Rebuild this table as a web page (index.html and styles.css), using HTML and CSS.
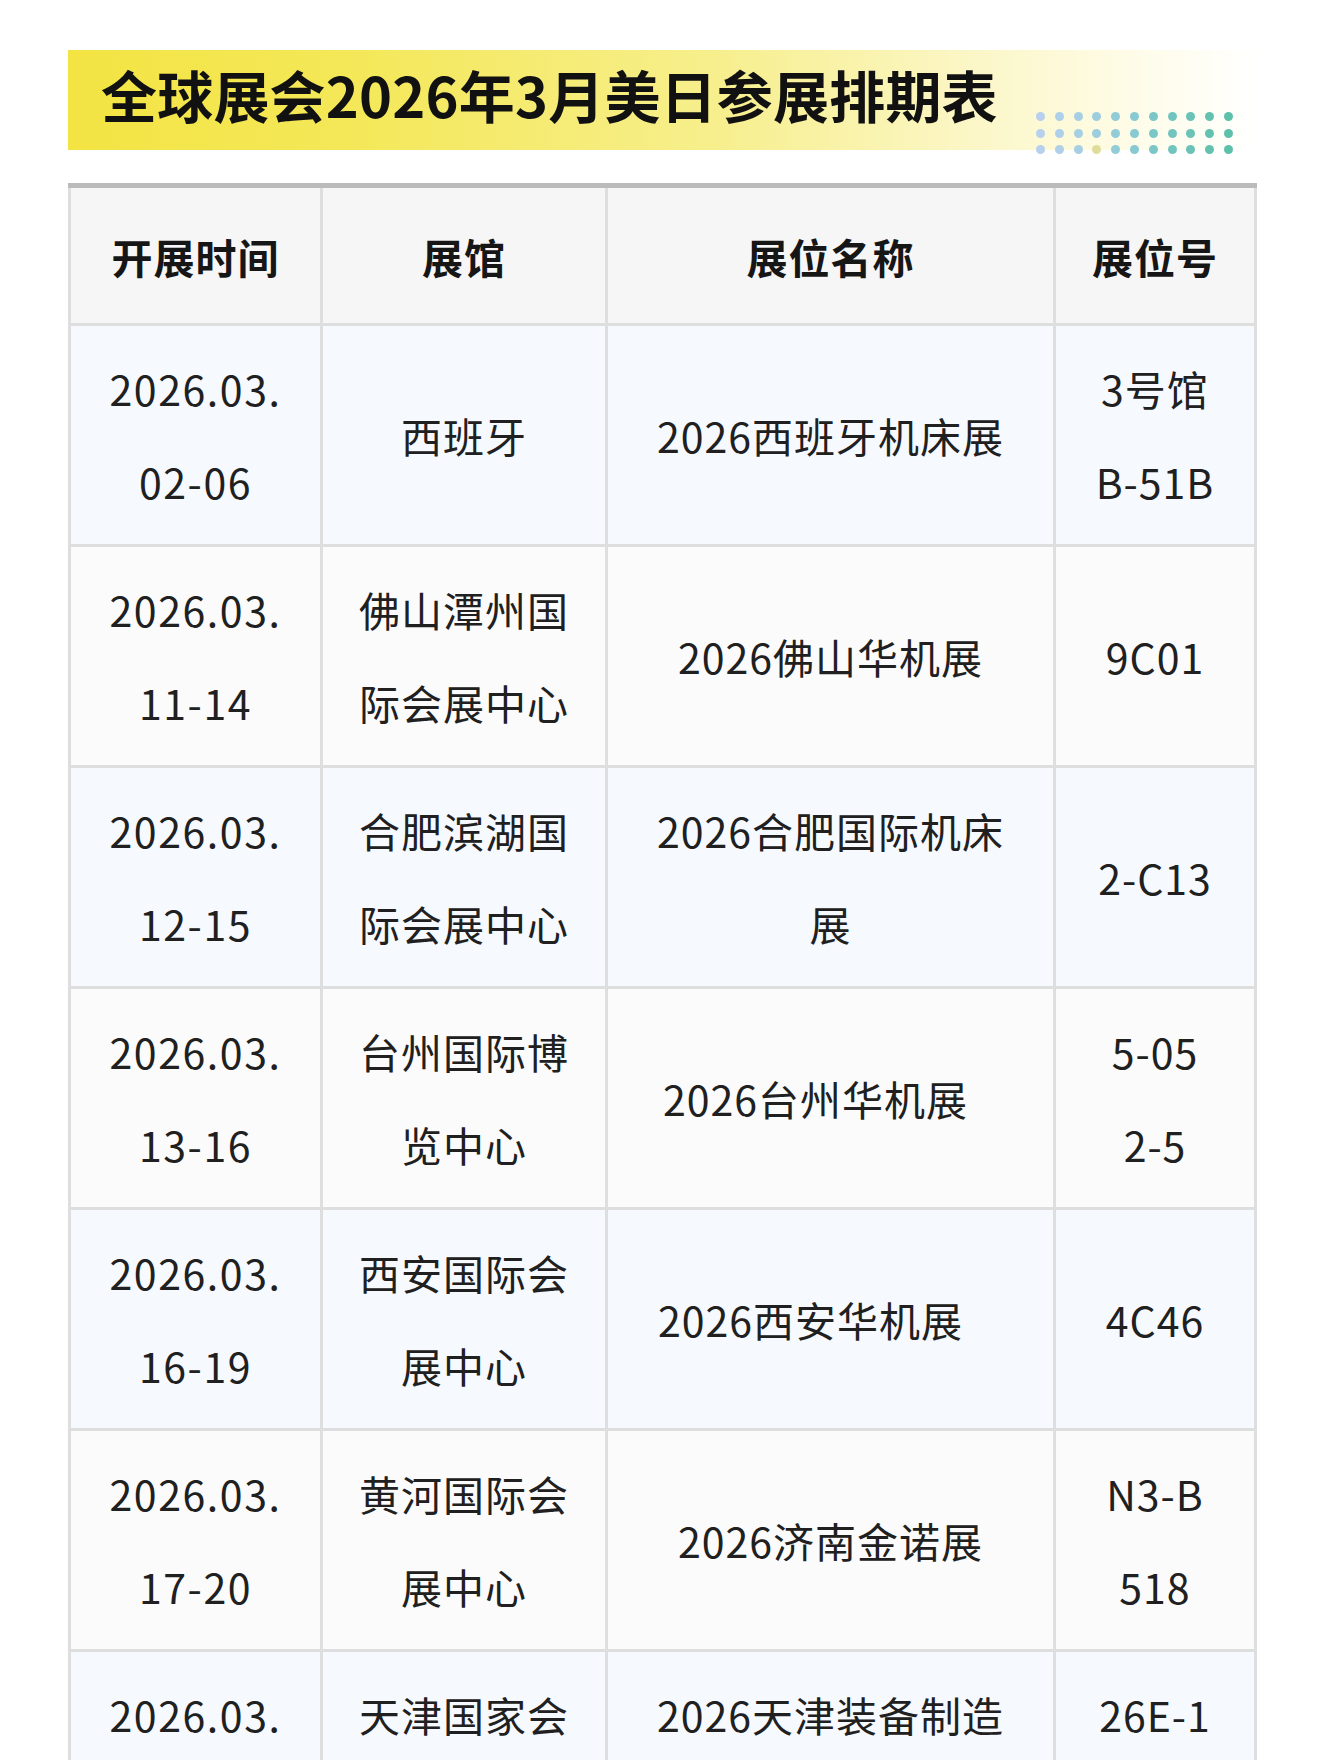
FILE: index.html
```html
<!DOCTYPE html>
<html lang="zh-CN">
<head>
<meta charset="utf-8">
<title>全球展会2026年3月美日参展排期表</title>
<link rel="stylesheet" href="styles.css">
</head>
<body>
<div class="page">
  <header class="title-band">
    <h1 class="title">全球展会2026年3月美日参展排期表</h1>
    <div class="dots" aria-hidden="true">
      <span></span><span></span><span></span><span></span><span></span><span></span><span></span><span></span><span></span><span></span><span></span>
      <span></span><span></span><span></span><span></span><span></span><span></span><span></span><span></span><span></span><span></span><span></span>
      <span></span><span></span><span></span><span class="dot-yellow"></span><span></span><span></span><span></span><span></span><span></span><span></span><span></span>
    </div>
  </header>

  <table class="schedule">
    <colgroup>
      <col class="col-date">
      <col class="col-hall">
      <col class="col-name">
      <col class="col-booth">
    </colgroup>
    <thead>
      <tr>
        <th>开展时间</th>
        <th>展馆</th>
        <th>展位名称</th>
        <th>展位号</th>
      </tr>
    </thead>
    <tbody>
      <tr>
        <td>2026.03.<br>02-06</td>
        <td>西班牙</td>
        <td>2026西班牙机床展</td>
        <td>3号馆<br>B-51B</td>
      </tr>
      <tr>
        <td>2026.03.<br>11-14</td>
        <td>佛山潭州国际会展中心</td>
        <td>2026佛山华机展</td>
        <td>9C01</td>
      </tr>
      <tr>
        <td>2026.03.<br>12-15</td>
        <td>合肥滨湖国际会展中心</td>
        <td>2026合肥国际机床展</td>
        <td>2-C13</td>
      </tr>
      <tr>
        <td>2026.03.<br>13-16</td>
        <td>台州国际博览中心</td>
        <td class="nudge-sm">2026台州华机展</td>
        <td>5-05<br>2-5</td>
      </tr>
      <tr>
        <td>2026.03.<br>16-19</td>
        <td>西安国际会展中心</td>
        <td class="nudge-md">2026西安华机展</td>
        <td>4C46</td>
      </tr>
      <tr>
        <td>2026.03.<br>17-20</td>
        <td>黄河国际会展中心</td>
        <td>2026济南金诺展</td>
        <td>N3-B<br>518</td>
      </tr>
      <tr>
        <td>2026.03.<br>18-21</td>
        <td>天津国家会展中心</td>
        <td>2026天津装备制造业博览会</td>
        <td>26E-1<br>08</td>
      </tr>
    </tbody>
  </table>
</div>
</body>
</html>
```

FILE: styles.css
```css
html, body {
  margin: 0;
  padding: 0;
  background: #ffffff;
}

body {
  font-family: "Noto Sans CJK SC", "Noto Sans", sans-serif;
  color: #222222;
}

.page {
  width: 1190px;
  padding: 50px 0 0 68px;
}

/* ---------- title band ---------- */
.title-band {
  position: relative;
  height: 100px;
  background: linear-gradient(90deg,
    #f3e443 0%,
    #f4e85a 25%,
    #f7ef8e 55%,
    #fbf6c4 75%,
    #fefce9 90%,
    #ffffff 100%);
}

.title {
  margin: 0;
  padding-left: 33px;
  font-size: 56px;
  font-weight: 700;
  line-height: 88px;
  color: #111111;
  letter-spacing: 0.2px;
}

.dots {
  position: absolute;
  left: 968px;
  top: 62px;
  display: grid;
  grid-template-columns: repeat(11, 9px);
  grid-auto-rows: 9px;
  column-gap: 9.8px;
  row-gap: 7.7px;
}

.dots span {
  width: 9px;
  height: 9px;
  border-radius: 50%;
  background: #b4cfec;
}

.dots span:nth-child(11n+1)  { background: #b6d0ee; }
.dots span:nth-child(11n+2)  { background: #afd0ea; }
.dots span:nth-child(11n+3)  { background: #a6cfe4; }
.dots span:nth-child(11n+4)  { background: #9dcddf; }
.dots span:nth-child(11n+5)  { background: #93ccd9; }
.dots span:nth-child(11n+6)  { background: #88cad2; }
.dots span:nth-child(11n+7)  { background: #7bc7c7; }
.dots span:nth-child(11n+8)  { background: #72c5bf; }
.dots span:nth-child(11n+9)  { background: #6bc3b8; }
.dots span:nth-child(11n+10) { background: #63c1b0; }
.dots span:nth-child(11n+11) { background: #5cc0aa; }
.dots span.dot-yellow        { background: #dedd9a; }

/* ---------- table ---------- */
.schedule {
  margin-top: 33px;
  width: 1186px;
  border-collapse: collapse;
  table-layout: fixed;
  border-top: 5px solid #bbbbbb;
}

.col-date  { width: 252px; }
.col-hall  { width: 285px; }
.col-name  { width: 448px; }
.col-booth { width: 201px; }

.schedule th,
.schedule td {
  border: 3px solid #dedede;
  text-align: center;
  vertical-align: middle;
  font-size: 41px;
  line-height: 93px;
  letter-spacing: 1px;
  padding: 16px 30px;
}

.schedule td:nth-child(1) {
  letter-spacing: 1.6px;
}

.schedule td:nth-child(3) {
  padding-left: 40px;
  padding-right: 40px;
}

.schedule th {
  background: #f6f6f6;
  font-weight: 700;
  color: #161616;
  padding-top: 22px;
  padding-bottom: 20px;
}

.schedule td {
  color: #202020;
  font-weight: 400;
}

.schedule tbody tr:nth-child(odd) td {
  background: #f6f9fe;
}

.schedule tbody tr:nth-child(even) td {
  background: #fbfbfb;
}

.schedule td.nudge-sm {
  padding-right: 70px;
  padding-left: 40px;
}

.schedule td.nudge-md {
  padding-right: 80px;
  padding-left: 40px;
}
```
